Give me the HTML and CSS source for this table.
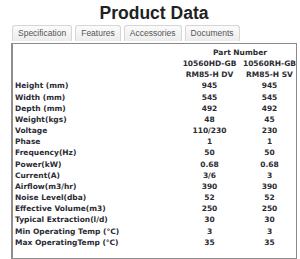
FILE: index.html
```html
<!DOCTYPE html>
<html>
<head>
<meta charset="utf-8">
<link rel="stylesheet" href="styles.css">
</head>
<body>
<div class="wrap">
  <h1 class="title">Product Data</h1>
  <div class="tabs">
    <span class="tab">Specification</span>
    <span class="tab">Features</span>
    <span class="tab">Accessories</span>
    <span class="tab">Documents</span>
  </div>
  <div class="panel">
    <table class="spec">
      <colgroup><col class="c-label"><col class="c-val"><col class="c-val2"></colgroup>
      <tr><td></td><td colspan="2" class="v">Part Number</td></tr>
      <tr><td></td><td class="v">10560HD-GB</td><td class="v">10560RH-GB</td></tr>
      <tr><td></td><td class="v">RM85-H DV</td><td class="v">RM85-H SV</td></tr>
      <tr><td>Height (mm)</td><td class="v">945</td><td class="v">945</td></tr>
      <tr><td>Width (mm)</td><td class="v">545</td><td class="v">545</td></tr>
      <tr><td>Depth (mm)</td><td class="v">492</td><td class="v">492</td></tr>
      <tr><td>Weight(kgs)</td><td class="v">48</td><td class="v">45</td></tr>
      <tr><td>Voltage</td><td class="v">110/230</td><td class="v">230</td></tr>
      <tr><td>Phase</td><td class="v">1</td><td class="v">1</td></tr>
      <tr><td>Frequency(Hz)</td><td class="v">50</td><td class="v">50</td></tr>
      <tr><td>Power(kW)</td><td class="v">0.68</td><td class="v">0.68</td></tr>
      <tr><td>Current(A)</td><td class="v">3/6</td><td class="v">3</td></tr>
      <tr><td>Airflow(m3/hr)</td><td class="v">390</td><td class="v">390</td></tr>
      <tr><td>Noise Level(dba)</td><td class="v">52</td><td class="v">52</td></tr>
      <tr><td>Effective Volume(m3)</td><td class="v">250</td><td class="v">250</td></tr>
      <tr><td>Typical Extraction(l/d)</td><td class="v">30</td><td class="v">30</td></tr>
      <tr><td>Min Operating Temp (°C)</td><td class="v">3</td><td class="v">3</td></tr>
      <tr><td>Max OperatingTemp (°C)</td><td class="v">35</td><td class="v">35</td></tr>
    </table>
  </div>
</div>
</body>
</html>
```
FILE: styles.css
```css
html, body { margin: 0; padding: 0; background: #fff; }
.wrap { margin-left: 11px; width: 286px; }
.title {
  margin: 3px 0 0 0;
  font-family: "Liberation Sans", Arial, sans-serif;
  font-weight: bold;
  font-size: 17.5px;
  line-height: 20px;
  text-align: center;
  color: #222;
}
.tabs {
  display: flex;
  gap: 3px;
  margin-top: 2px;
  padding-left: 1px;
}
.tab {
  font-family: "Liberation Sans", Arial, sans-serif;
  font-size: 8.5px;
  line-height: 13px;
  color: #555;
  padding: 1px 5px 1px 5px;
  border: 1px solid #d6d6d6;
  border-bottom: none;
  border-radius: 3px 3px 0 0;
  background: linear-gradient(#fbfbfb, #ececec);
}
.panel {
  margin-top: 2px;
  height: 211px;
  border: 1px solid #8a8a8a;
  border-left: 2px solid #8f8f8f;
  border-bottom: 2px solid #8f8f8f;
  padding: 3px 0 0 2px;
}
.spec {
  border-collapse: collapse;
  table-layout: fixed;
  width: 285px;
  font-family: "DejaVu Sans", Verdana, sans-serif;
  font-weight: bold;
  font-size: 7.5px;
  color: #2b2b33;
}
.c-label { width: 165px; }
.c-val { width: 59px; }
.c-val2 { width: 61px; }
.spec td {
  padding: 0;
  height: 11.15px;
  line-height: 11.15px;
  white-space: nowrap;
}
.spec td.v { text-align: center; }
```
